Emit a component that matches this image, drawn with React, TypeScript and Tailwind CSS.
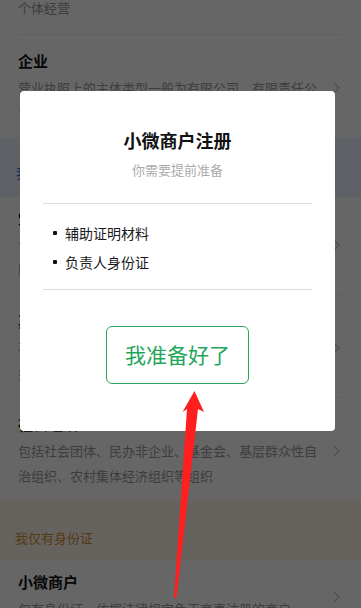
import React from "react";

const Chevron = () => (
  <svg width="7" height="12" viewBox="0 0 7 12" className="shrink-0">
    <polyline points="1,1 6,6 1,11" fill="none" stroke="#c4c4c4" strokeWidth="1.2" />
  </svg>
);

type ItemProps = { title?: string; desc: string; border?: boolean; pt?: string };

const Item = ({ title, desc, border = true, pt = "pt-[16px]" }: ItemProps) => (
  <div
    className={`ml-[17px] mr-[19px] pl-[1px] pb-[12px] flex items-center gap-[15px] ${pt} ${
      border ? "border-b border-[#ededed]" : ""
    }`}
  >
    <div className="w-[300px] shrink-0">
      {title && (
        <div className="h-[20px] text-[15px] leading-[20px] font-bold text-[#111]">{title}</div>
      )}
      <div className={`${title ? "mt-[4px]" : ""} text-[13px] leading-[25px] text-[#9a9a9a]`}>{desc}</div>
    </div>
    <Chevron />
  </div>
);

export default function App() {
  return (
    <div className="relative h-[608px] w-[361px] overflow-hidden bg-white font-['Noto_Sans_CJK_SC','Noto_Sans',sans-serif]">
      {/* underlying page */}
      <div className="-mt-[5px]">
        <div className="ml-[17px] mr-[19px] pl-[1px] pb-[14px] border-b border-[#ededed] text-[13px] leading-[25px] text-[#9a9a9a]">
          个体经营
        </div>
        <Item
          title="企业"
          desc="营业执照上的主体类型一般为有限公司、有限责任公司、股份有限公司等"
          border={false}
        />
        <div className="bg-[#ebf3ff] pl-[16px] pt-[26px] pb-[14px] text-[13px] leading-[20px] text-[#2b76d6]">
          我是党政机关、事业单位或社会组织
        </div>
        <Item
          pt="pt-[11px]"
          title="党政、机关及事业单位"
          desc="包括国内各级、各类政府机构、事业单位、具有行政职能的社会团体"
        />
        <Item title="其他组织" desc="不属于企业、政府/事业单位、社会组织的其他组织类型" />
        <Item
          title="社会组织"
          desc="包括社会团体、民办非企业、基金会、基层群众性自治组织、农村集体经济组织等组织"
          border={false}
        />
        <div className="bg-[#fff7eb] pl-[15px] pt-[28px] pb-[12px] text-[13px] leading-[20px] text-[#d4923c]">
          我仅有身份证
        </div>
        <Item
          pt="pt-[12px]"
          title="小微商户"
          desc="仅有身份证，依据法律规定免于商事注册的商户"
          border={false}
        />
      </div>

      {/* dim overlay */}
      <div className="absolute inset-0 bg-[rgba(0,0,0,0.6)]" />

      {/* modal */}
      <div className="absolute left-[20px] top-[91px] h-[340px] w-[315px] rounded-[4px] bg-white">
        <div className="pt-[37px] text-center text-[18px] leading-[24px] font-bold text-[#111]">
          小微商户注册
        </div>
        <div className="mt-[9px] text-center text-[13px] leading-[18px] text-[#ababab]">你需要提前准备</div>
        <div className="mx-[23px] mt-[24px] h-px bg-[#dcdcdc]" />
        <div className="pl-[33px] pt-[19px] flex flex-col gap-[9px]">
          <div className="flex items-center gap-[8px] text-[14px] leading-[20px] text-[#1a1a1a]">
            <span className="h-[4px] w-[4px] rounded-[1px] bg-[#111]" />
            辅助证明材料
          </div>
          <div className="flex items-center gap-[8px] text-[14px] leading-[20px] text-[#1a1a1a]">
            <span className="h-[4px] w-[4px] rounded-[1px] bg-[#111]" />
            负责人身份证
          </div>
        </div>
        <div className="mx-[23px] mt-[17px] h-px bg-[#dcdcdc]" />
        <div className="mt-[36px] flex justify-center">
          <div className="flex h-[58px] w-[143px] items-center justify-center rounded-[6px] border border-[#2ea35a] text-[21px] text-[#1fa65a]">
            我准备好了
          </div>
        </div>
      </div>

      {/* red arrow annotation */}
      <svg className="pointer-events-none absolute inset-0" width="361" height="608" viewBox="0 0 361 608">
        <polygon
          points="194.5,391 204,412 198,409 176.5,598 174,598 187,409 182.5,412"
          fill="#ff1f1f"
        />
      </svg>
    </div>
  );
}
